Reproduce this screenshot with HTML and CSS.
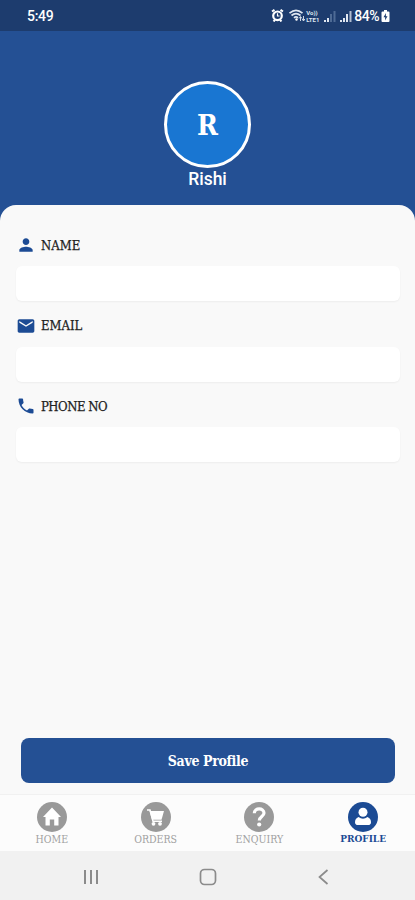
FILE: index.html
```
<!DOCTYPE html>
<html lang="en">
<head>
    <meta charset="UTF-8">
    <meta name="viewport" content="width=device-width, initial-scale=1.0">
    <title>Profile</title>
    <link rel="stylesheet" href="styles.css">
</head>
<body>

    <!-- Status Bar -->
    <div class="status-bar">
        <span class="time">5:49</span>
        <div class="status-icons">
            <svg class="alarm" width="13" height="13" viewBox="0 0 13 13">
                <path d="M1 2.500L3.500 .8M12 2.500L9.500 .8M2.500 12.500L4 10.800M10.500 12.500L9 10.800" stroke="#fff" stroke-width="2"/>
                <circle cx="6.500" cy="6.800" r="4.300" fill="#1d3c6e" stroke="#fff" stroke-width="2.200"/>
                <path d="M6.500 4.300v2.700h2" fill="none" stroke="#fff" stroke-width="1.200"/>
            </svg>
            <svg class="wifi" width="16" height="13" viewBox="0 0 16 13">
                <path d="M.5 4.200Q7 -1.500 13.500 4.200M2.500 6.500Q7 2.800 11.500 6.500M5 8.800Q7 7 9 8.800" fill="none" stroke="#dfe6f0" stroke-width="1.700"/>
                <circle cx="7.500" cy="10.500" r="1.200" fill="#fff"/>
                <path d="M11.500 12V8M10 9.500l1.500-2 1.500 2M14.500 7v4.500M13.200 10l1.300 2 1.300-2" fill="none" stroke="#dfe6f0" stroke-width=".9"/>
            </svg>
            <div class="volte"><span>Vo))</span><span>LTE1</span></div>
            <svg class="signal" width="12" height="12" viewBox="0 0 12 12">
                <path d="M0 12v-2h2v2zM3 12V8h2v4z" fill="#dfe6f0"/>
                <path d="M6 12V4h2v8zM9.500 12V1h2v11z" fill="#4e6b95"/>
            </svg>
            <svg class="signal" width="12" height="12" viewBox="0 0 12 12">
                <path d="M0 12v-2h2v2zM3 12V8h2v4zM6 12V4h2v8z" fill="#dfe6f0"/>
                <path d="M9.500 12V1h2v11z" fill="#b0bdd0"/>
            </svg>
            <span class="battery-text">84%</span>
            <svg class="battery" width="9" height="12" viewBox="0 0 9 12">
                <path d="M3 0h3v1.500h1.500q1 0 1 1V11q0 1-1 1h-6q-1 0-1-1V2.500q0-1 1-1H3z" fill="#fff"/>
                <path d="M5 3L2.500 7.200h1.700L4 10.500l2.500-4.300H4.800z" fill="#1d3c6e"/>
            </svg>
        </div>
    </div>

    <!-- Header -->
    <div class="header">
        <div class="avatar">R</div>
        <div class="user-name">Rishi</div>
    </div>

    <!-- Profile Form -->
    <div class="panel">
        <div class="field">
            <label class="label" for="name">
                <svg width="20" height="20" viewBox="0 0 24 24" fill="#1c4b94"><path d="M12 12c2.210 0 4-1.790 4-4s-1.790-4-4-4-4 1.790-4 4 1.790 4 4 4zm0 2c-2.670 0-8 1.340-8 4v2h16v-2c0-2.660-5.330-4-8-4z"/></svg>
                NAME
            </label>
            <input type="text" id="name" class="input">
        </div>
        <div class="field">
            <label class="label" for="email">
                <svg width="20" height="20" viewBox="0 0 24 24" fill="#1c4b94"><path d="M20 4H4c-1.100 0-2 .9-2 2v12c0 1.100.9 2 2 2h16c1.100 0 2-.9 2-2V6c0-1.100-.9-2-2-2zm0 4l-8 5-8-5V6l8 5 8-5v2z"/></svg>
                EMAIL
            </label>
            <input type="text" id="email" class="input">
        </div>
        <div class="field">
            <label class="label label-phone" for="phone">
                <svg width="20" height="20" viewBox="0 0 24 24" fill="#1c4b94"><path d="M6.620 10.790c1.440 2.830 3.760 5.140 6.590 6.590l2.200-2.200c.27-.27.67-.36 1.020-.24 1.120.37 2.330.57 3.570.57.55 0 1 .45 1 1V20c0 .55-.45 1-1 1-9.390 0-17-7.610-17-17 0-.55.45-1 1-1h3.500c.55 0 1 .45 1 1 0 1.250.2 2.450.57 3.570.11.35.03.74-.25 1.020l-2.200 2.200z"/></svg>
                PHONE NO
            </label>
            <input type="text" id="phone" class="input">
        </div>
        <button class="save-btn">Save Profile</button>
    </div>

    <!-- Tabs -->
    <div class="tabs">
        <a class="tab">
            <svg width="30" height="30" viewBox="0 0 30 30">
                <circle cx="15" cy="15" r="15" fill="#999"/>
                <path d="M15 5.500L6 15h2.500v8.500h4.300v-6h4.400v6h4.300V15H24z" fill="#fff"/>
            </svg>
            <span>HOME</span>
        </a>
        <a class="tab">
            <svg width="30" height="30" viewBox="0 0 30 30">
                <circle cx="15" cy="15" r="15" fill="#999"/>
                <path d="M6 8h3l3 11.300h9" fill="none" stroke="#fff" stroke-width="1.500"/>
                <path d="M8.500 9H23l-2.500 8.800H11z" fill="#fff"/>
                <circle cx="12.500" cy="21.800" r="1.900" fill="#fff"/>
                <circle cx="19" cy="21.800" r="1.900" fill="#fff"/>
            </svg>
            <span>ORDERS</span>
        </a>
        <a class="tab">
            <svg width="30" height="30" viewBox="0 0 30 30">
                <circle cx="15" cy="15" r="15" fill="#999"/>
                <path d="M10.300 11.200C10.300 5.500 20 5.500 20 11c0 3.500-4.700 3.500-4.700 7.500" fill="none" stroke="#fff" stroke-width="3.200"/>
                <circle cx="15.200" cy="22.500" r="2.100" fill="#fff"/>
            </svg>
            <span>ENQUIRY</span>
        </a>
        <a class="tab active">
            <svg width="30" height="30" viewBox="0 0 30 30">
                <circle cx="15" cy="15" r="15" fill="#1c4b94"/>
                <circle cx="15" cy="10.300" r="4.500" fill="#fff"/>
                <path d="M10.500 15q4.500 3.500 9 0 3.500 1.500 3.500 5.200 0 2.800-3 2.800H10q-3 0-3-2.800Q7 16.500 10.500 15z" fill="#fff"/>
            </svg>
            <span>PROFILE</span>
        </a>
    </div>

    <!-- System Navigation -->
    <div class="system-nav">
        <svg width="18" height="18" viewBox="0 0 18 18"><path d="M3 2v14M9 2v14M15 2v14" stroke="#8b8b8b" stroke-width="2"/></svg>
        <svg width="18" height="18" viewBox="0 0 18 18"><rect x="1.500" y="1.500" width="15" height="15" rx="4" fill="none" stroke="#8b8b8b" stroke-width="1.700"/></svg>
        <svg width="18" height="18" viewBox="0 0 18 18"><path d="M12.500 2L4.500 9l8 7" fill="none" stroke="#8b8b8b" stroke-width="1.700"/></svg>
    </div>

</body>
</html>
```
FILE: styles.css
```
* {
    margin: 0;
    padding: 0;
    box-sizing: border-box;
}
body {
    height: 900px;
    display: flex;
    flex-direction: column;
    background: #245094;
    font-family: "Roboto Slab", "DejaVu Serif Condensed", "DejaVu Serif", serif;
    font-stretch: condensed;
    overflow: hidden;
}
svg {
    display: block;
    flex-shrink: 0;
}
/* Status Bar */
.status-bar {
    height: 31px;
    flex-shrink: 0;
    display: flex;
    justify-content: space-between;
    align-items: center;
    padding: 0 25px 0 27px;
    background: #1d3c6e;
    color: #fff;
    font-family: Roboto, sans-serif;
    font-stretch: normal;
}
.time {
    font-size: 14px;
    font-weight: 500;
    letter-spacing: -0.3px;
}
.status-icons {
    display: flex;
    align-items: center;
}
.wifi {
    margin-left: 5px;
}
.volte {
    width: 16px;
    margin-left: 1px;
    display: flex;
    flex-direction: column;
    font-size: 6px;
    line-height: 7px;
    font-weight: bold;
    color: #dfe6f0;
}
.signal {
    margin-left: 2px;
    margin-right: 2px;
}
.battery-text {
    font-size: 14px;
    font-weight: 500;
    letter-spacing: -0.5px;
}
.battery {
    margin-left: 2px;
}
/* Header */
.header {
    height: 174px;
    flex-shrink: 0;
    padding-top: 50px;
    display: flex;
    flex-direction: column;
    align-items: center;
    color: #fff;
}
.avatar {
    width: 87px;
    height: 87px;
    display: flex;
    align-items: center;
    justify-content: center;
    background: #1976d2;
    border: 3px solid #fff;
    border-radius: 50%;
    font-size: 28px;
    font-weight: bold;
    line-height: 36px;
    padding-top: 2px;
}
.user-name {
    font-family: Roboto, sans-serif;
    font-stretch: normal;
    font-size: 17.5px;
    line-height: 23px;
    font-weight: 500;
}
/* Profile Form */
.panel {
    flex: 1;
    display: flex;
    flex-direction: column;
    padding: 30px 15px 11px 16px;
    background: #f9f9f9;
    border-radius: 16px 16px 0 0;
}
.field {
    height: 80.5px;
}
.label {
    height: 20px;
    display: flex;
    align-items: center;
    gap: 5px;
    color: #222;
    font-size: 13px;
    -webkit-text-stroke: 0.25px #222;
}
.label-phone {
    letter-spacing: -0.5px;
}
.input {
    display: block;
    width: 100%;
    height: 35px;
    margin-top: 11px;
    padding: 0 12px;
    background: #fff;
    border: none;
    border-radius: 6px;
    box-shadow: 0 1px 2px rgba(0, 0, 0, 0.05);
    font-size: 14px;
}
.save-btn {
    height: 45px;
    margin: auto 5px 0;
    background: #245094;
    border: none;
    border-radius: 8px;
    color: #fff;
    font-family: inherit;
    font-stretch: inherit;
    font-size: 14px;
    font-weight: bold;
    letter-spacing: -0.35px;
}
/* Tabs */
.tabs {
    height: 57px;
    flex-shrink: 0;
    display: flex;
    padding-top: 7px;
    background: #fcfcfc;
    border-top: 1px solid #f1f1f1;
}
.tab {
    flex: 1;
    display: flex;
    flex-direction: column;
    align-items: center;
    color: #a0a0a0;
    font-size: 10.5px;
    line-height: 14px;
}
.active {
    color: #1c4b94;
    font-size: 10px;
    font-weight: bold;
}
/* System Navigation */
.system-nav {
    height: 49px;
    flex-shrink: 0;
    display: flex;
    justify-content: space-between;
    align-items: center;
    padding: 2px 82px 0;
    background: #f1f1f1;
}
```
